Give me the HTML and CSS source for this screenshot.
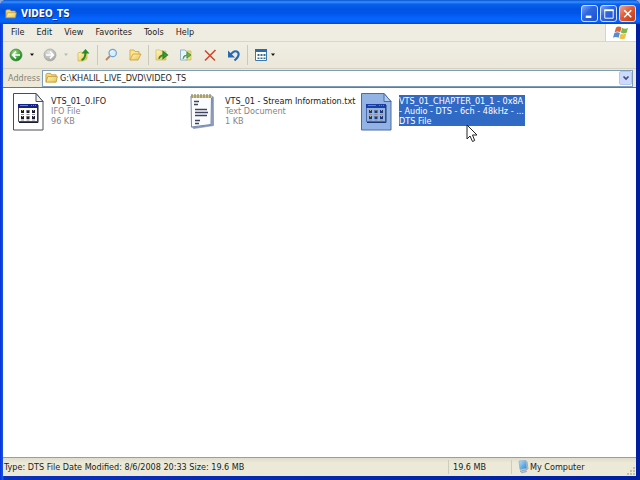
FILE: index.html
```html
<!DOCTYPE html>
<html lang="en">
<head>
<meta charset="utf-8">
<title>VIDEO_TS</title>
<link rel="stylesheet" href="styles.css">
</head>
<body>
<svg class="defs" aria-hidden="true">
  <defs>
    <linearGradient id="folder-fill" x2="1" y2="1"><stop stop-color="#fff9c4"/><stop offset="1" stop-color="#e8bf48"/></linearGradient>
    <radialGradient id="green-fill" cx=".4" cy=".3" r=".75"><stop stop-color="#9ade7c"/><stop offset=".6" stop-color="#3fa43a"/><stop offset="1" stop-color="#24762a"/></radialGradient>
    <radialGradient id="gray-fill" cx=".4" cy=".3" r=".75"><stop stop-color="#e2e2e0"/><stop offset="1" stop-color="#a3a3a1"/></radialGradient>
    <linearGradient id="screen-fill" x2="1" y2="1"><stop stop-color="#b9e3fb"/><stop offset="1" stop-color="#2a7fd2"/></linearGradient>
    <symbol id="folder" viewBox="0 0 14 12">
      <path d="M1 10V2l1-1h4l1 1.500h5v2" fill="#f3d873" stroke="#b58e2e" stroke-width=".8"/>
      <path d="M1 10.500 3 4.500h10.300L12 10.500z" fill="url(#folder-fill)" stroke="#b8912e" stroke-width=".8"/>
    </symbol>
    <symbol id="app-file" viewBox="0 0 32 39">
      <path class="paper" d="M1.500 1.500H24l7 8V38H1.500z"/>
      <path class="fold" d="M24 1.500V9.500h7z"/>
      <path class="panel" d="M6.500 12.500h19v17h-19z"/>
      <path class="panel-title" d="M6 12h20v4H6z"/>
      <path d="M8 13.500h8M19 13.500h1M21 13.500h1M23 13.500h1" stroke="#7484c8"/>
      <path class="panel-edge" d="M26 13v17.500H7"/>
      <path class="tiles" d="M9 18h3v3H9zM14.500 18h3v3h-3zM20 18h3v3h-3zM9 24h3v3H9zM14.500 24h3v3h-3zM20 24h3v3h-3z"/>
      <path d="M9 22.500h3M14.500 22.500h3M20 22.500h3M9 28h3M14.500 28h3M20 28h3" stroke="#8c8c98"/>
      <path d="M10 18.500h1M15.500 18.500h1M21 18.500h1M10 24.500h1M15.500 24.500h1M21 24.500h1" stroke="#c7a66a"/>
    </symbol>
  </defs>
</svg>
<div class="window">
  <header class="titlebar">
    <svg class="title-icon" aria-hidden="true"><use href="#folder"/></svg>
    <h1>VIDEO_TS</h1>
    <div class="controls">
      <button class="control" aria-label="Minimize"><svg viewBox="0 0 16 16"><path d="M4 11.500h6" stroke="#fff" stroke-width="2.500"/></svg></button>
      <button class="control" aria-label="Maximize"><svg viewBox="0 0 16 16"><path d="M4 4.500h9V13H4z" fill="none" stroke="#fff"/><path d="M3.500 4.500h10" stroke="#fff" stroke-width="2"/></svg></button>
      <button class="control close" aria-label="Close"><svg viewBox="0 0 16 16"><path d="m4.500 4.500 7.500 7.500M12 4.500 4.500 12" stroke="#fff" stroke-width="1.700"/></svg></button>
    </div>
  </header>
  <div class="menubar">
    <nav class="menus">
      <button>File</button><button>Edit</button><button>View</button><button>Favorites</button><button>Tools</button><button>Help</button>
    </nav>
    <div class="flag">
      <svg viewBox="0 0 18 16" aria-hidden="true">
        <path d="M4 2.500q3-2 5.500 0L8.200 7.300q-2.500-1.800-5.600 0z" fill="#d9673a"/>
        <path d="M10.200 2.800q2.500 1.600 5.800.2l-1.400 4.800q-3 1.400-5.700-.2z" fill="#7db64a"/>
        <path d="M2.400 8q3-1.700 5.500 0L6.600 12.700q-2.600-1.600-5.600 0z" fill="#588bd0"/>
        <path d="M8.700 8.400q2.500 1.600 5.700.2L13 13.500q-3 1.400-5.700-.3z" fill="#ecc348"/>
      </svg>
    </div>
  </div>
  <div class="toolbar">
    <button class="tool" aria-label="Back"><svg viewBox="0 0 14 14"><circle cx="7" cy="7" r="6" fill="url(#green-fill)" stroke="#3a8440" stroke-width=".7"/><path d="M11 7H4M7 3.600 3.600 7 7 10.400" fill="none" stroke="#fff" stroke-width="1.700"/></svg></button>
    <button class="drop" aria-label="Back history"><svg viewBox="0 0 6 4"><path d="M1 .5h4L3 3z" fill="#111"/></svg></button>
    <button class="tool" aria-label="Forward"><svg viewBox="0 0 14 14"><circle cx="7" cy="7" r="6" fill="url(#gray-fill)" stroke="#a5a5a2" stroke-width=".7"/><path d="M3 7h7M7 3.600 10.400 7 7 10.400" fill="none" stroke="#fff" stroke-width="1.700"/></svg></button>
    <button class="drop" aria-label="Forward history"><svg viewBox="0 0 6 4"><path d="M1 .5h4L3 3z" fill="#bbb9ae"/></svg></button>
    <button class="tool" aria-label="Up"><svg viewBox="0 0 14 14"><path d="M1 13V5l3-1 2 1h4v6l-4 2z" fill="url(#folder-fill)" stroke="#d0b24e" stroke-width=".7"/><path d="M4.500 12q4-1 4-8" fill="none" stroke="#278b2a" stroke-width="2"/><path d="M4.500 5.500 8.500 1l4 4.500z" fill="#278b2a"/></svg></button>
    <span class="rule"></span>
    <button class="tool" aria-label="Search"><svg viewBox="0 0 14 14"><path d="m6 8-4 4" stroke="#b78562" stroke-width="1.800"/><circle cx="8.700" cy="5" r="3.700" fill="#d7eefb" stroke="#6fa4d4" stroke-width="1.200"/><path d="M6.800 4.500Q7 3 8.800 3" stroke="#fff" fill="none"/></svg></button>
    <button class="tool spaced" aria-label="Folders"><svg viewBox="0 0 14 14"><path d="M2 12V2h4l1 1.500h4V6" fill="#f9e69b" stroke="#d5a83b" stroke-width=".9"/><path d="m2 12 3-6h8l-3 6z" fill="url(#folder-fill)" stroke="#ce9a2c" stroke-width=".8"/></svg></button>
    <span class="rule"></span>
    <button class="tool" aria-label="Move to"><svg viewBox="0 0 14 14"><path d="M1 12V2h4l1 1h5v9z" fill="url(#folder-fill)" stroke="#d1b75c" stroke-width=".7"/><path d="M4 11q0-4 5-4M8 3.500 12.500 7 8 10.500z" fill="#3d9f32" stroke="#2b8428" stroke-width="1.200"/></svg></button>
    <button class="tool spaced" aria-label="Copy to"><svg viewBox="0 0 14 14"><path d="M6 3h6v9H7z" fill="#f3df83" stroke="#cdb24b" stroke-width=".7"/><path d="M1.500 2H6l2 2v8H1.500z" fill="#e6f3fc" stroke="#83a5c2" stroke-width=".8"/><path d="M4 11q0-4 4-4M8 4l4 3-4 3z" fill="#66b04c" stroke="#4f983e"/></svg></button>
    <button class="tool spaced" aria-label="Delete"><svg viewBox="0 0 14 14"><path d="m2 2.500 10 10M12.500 2 2 12.500" stroke="#ce4b2c" stroke-width="1.600"/></svg></button>
    <button class="tool spaced" aria-label="Undo"><svg viewBox="0 0 14 14"><path d="M3 7.500C8 0 13.500 4 11 8.500q-1 2-3.500 4" fill="none" stroke="#2769b3" stroke-width="2.200"/><path d="M1 2.500v7h7z" fill="#2769b3"/></svg></button>
    <span class="rule"></span>
    <button class="tool" aria-label="Views"><svg viewBox="0 0 14 14"><path d="M1.500 2h11v10.500h-11z" fill="#fff" stroke="#3a78ae"/><path d="M1 2.500h12" stroke="#2f6ca5" stroke-width="3"/><path d="M3.500 6h2v2h-2zM6.500 6h2v2h-2zM9.500 6h2v2h-2zM3.500 9.500h2v1.500h-2zM6.500 9.500h2v1.500h-2zM9.500 9.500h2v1.500h-2z" fill="#387194"/></svg></button>
    <button class="drop views" aria-label="View options"><svg viewBox="0 0 6 4"><path d="M1 .5h4L3 3z" fill="#111"/></svg></button>
  </div>
  <div class="addressbar">
    <label for="address">Address</label>
    <div class="address-box">
      <svg class="address-icon" aria-hidden="true"><use href="#folder"/></svg>
      <input id="address" type="text" value="G:\KHALIL_LIVE_DVD\VIDEO_TS">
      <button aria-label="Show addresses"><svg viewBox="0 0 8 6"><path d="m1.500 1.500 2.500 2.500 2.500-2.500" fill="none" stroke="#3c4f83" stroke-width="1.700"/></svg></button>
    </div>
  </div>
  <main>
    <ul class="files">
      <li><button class="file">
        <svg class="file-icon" aria-hidden="true"><use href="#app-file"/></svg>
        <span class="details"><span class="name">VTS_01_0.IFO</span><span>IFO File</span><span>96 KB</span></span>
      </button></li>
      <li><button class="file">
        <svg class="file-icon" viewBox="-1 0 32 39" aria-hidden="true">
          <path d="M5 4h20l2 1v29L7 37l-3-2z" fill="#a5b3cc"/>
          <path d="M4 4h20.500l-.5 28.500L4.500 35z" fill="#fbfcff" stroke="#7688ac"/>
          <path d="M25.500 4.500 26 33 6 36" fill="none" stroke="#7f8fae"/>
          <path d="M4 4.500h21" stroke="#d8ca83" stroke-width="3"/>
          <path d="M5 6V2m3 4V2m3 4V2m3 4V2m3 4V2m3 4V2m3 4V2" stroke="#8c8060" stroke-width="1.200"/>
          <path d="M7 9.500h5M7 12.500h4M8 17.500h12M8 20.500h13M8 23.500h12M8 28.500h5M8 31.500h4" stroke="#3c4460" stroke-width="1.300"/>
        </svg>
        <span class="details"><span class="name">VTS_01 - Stream Information.txt</span><span>Text Document</span><span>1 KB</span></span>
      </button></li>
      <li><button class="file selected">
        <svg class="file-icon" aria-hidden="true"><use href="#app-file"/></svg>
        <span class="details"><span class="name">VTS_01_CHAPTER_01_1 - 0x8A</span><span>- Audio - DTS - 6ch - 48kHz - ...</span><span>DTS File</span></span>
      </button></li>
    </ul>
    <svg class="pointer" viewBox="0 0 12 19" aria-hidden="true"><path d="M1 1v14l3-3 2.500 5.500 2.200-1L6.500 11H11z" fill="#fff" stroke="#222"/></svg>
  </main>
  <footer class="statusbar">
    <span class="info">Type: DTS File Date Modified: 8/6/2008 20:33 Size: 19.6 MB</span>
    <span class="size">19.6 MB</span>
    <span class="place">
      <svg viewBox="0 0 12 14" aria-hidden="true"><path d="m2 1 7-.5 1 8-7 1z" fill="url(#screen-fill)" stroke="#8cb2d5" stroke-width=".8"/><path d="M10 1.500 11 9l-6 2" fill="none" stroke="#9daab8"/><path d="m3 11 5-1 2 1.500L5 13z" fill="#b5c1cc" stroke="#7e8d9d" stroke-width=".5"/></svg>
      My Computer
    </span>
    <svg class="grip" viewBox="0 0 10 10" aria-hidden="true"><path d="M7 1h2v2H7zM4 4h2v2H4zM7 4h2v2H7zM1 7h2v2H1zM4 7h2v2H4zM7 7h2v2H7z" fill="#c3bfae"/></svg>
  </footer>
</div>
</body>
</html>
```
FILE: styles.css
```css
* { box-sizing: border-box; }

body {
  margin: 0;
  background: #8aa6dc;
  color: #1c1c1c;
  font: 9px/11px "DejaVu Sans Condensed", "DejaVu Sans", sans-serif;
}

button, input {
  margin: 0;
  padding: 0;
  border: 0;
  background: none;
  color: inherit;
  font: inherit;
}

svg { display: block; flex: none; }

.defs { position: absolute; width: 0; height: 0; }

.window {
  display: flex;
  flex-direction: column;
  min-height: 100vh;
  padding: 0 4px 4px 3px;
  border-radius: 6px 6px 0 0;
  background: linear-gradient(to right, #0831d9, #1656e0 3px, #0a30bc 4px, #001ea0);
}

.titlebar {
  display: flex;
  align-items: center;
  gap: 4px;
  height: 24px;
  margin: 0 -4px 0 -3px;
  padding: 3px 4px 0 5px;
  border-radius: 6px 6px 0 0;
  background: linear-gradient(#0a52cc, #3590ff 2px, #0a61ee 4px, #0054e3 9px, #0055e8 13px, #0466ff 19px, #0462f6 22px, #0144c4);
}

.title-icon { width: 12px; height: 12px; }

.titlebar h1 {
  flex: 1;
  margin: 0;
  color: #fff;
  font: bold 10px/14px "DejaVu Sans Condensed", sans-serif;
  text-shadow: 1px 1px #0f2f80;
}

.controls { display: flex; gap: 2px; }

.control {
  width: 17px;
  height: 17px;
  border: 1px solid #d2e0ff;
  border-radius: 3px;
  background: linear-gradient(135deg, #7ba5f4, #2f67e2 40%, #1e51cb);
}

.control.close { background: linear-gradient(135deg, #f0a48c, #df5c37 45%, #c03a12); }

.control svg { width: 15px; height: 15px; }

.menubar {
  display: flex;
  height: 18px;
  border-bottom: 1px solid #dbd7c8;
  background: #efede2;
}

.menus {
  display: flex;
  flex: 1;
  gap: 12px;
  padding-left: 8px;
  border-right: 1px solid #d8d4c4;
}

.flag { display: flex; align-items: center; justify-content: center; width: 30px; background: #fff; }
.flag svg { width: 18px; height: 16px; }

.toolbar {
  display: flex;
  align-items: center;
  height: 27px;
  padding-left: 6px;
  border-bottom: 1px solid #d5d1c0;
  background: linear-gradient(#f0eee3, #ebe8da);
}

.tool svg { width: 14px; height: 14px; }
.spaced { margin-left: 10px; }
.drop { width: 6px; margin: 0 8px 0 6px; }
.drop svg { width: 6px; height: 4px; }
.drop.views { margin-left: 2px; }
.rule { width: 1px; height: 20px; margin: 0 6px; background: #cdc9b9; }

.addressbar {
  display: flex;
  align-items: center;
  height: 18px;
  padding: 0 3px 0 5px;
  background: #ece9d8;
}

.addressbar label { width: 34px; color: #85837a; }

.address-box {
  display: flex;
  flex: 1;
  align-items: center;
  height: 17px;
  border: 1px solid #7f9db9;
  background: #fff;
}

.address-icon { width: 13px; height: 12px; margin: 0 2px; }
.address-box input { flex: 1; min-width: 0; height: 15px; outline: 0; }

.address-box button {
  display: flex;
  align-items: center;
  justify-content: center;
  width: 13px;
  height: 14px;
  border: 1px solid #b3c7f3;
  border-radius: 2px;
  background: #cddafb;
}

.address-box button svg { width: 8px; height: 6px; }

main {
  position: relative;
  flex: 1;
  border-top: 1px solid #77776f;
  background: #fff;
}

.files {
  display: grid;
  grid-template-columns: repeat(auto-fill, 174px);
  margin: 0;
  padding: 4px 0 0 9px;
  list-style: none;
}

.file {
  --paper: #fff;
  --fold: #eef0f3;
  --outline: #4a4e56;
  --title: #14248a;
  --ink: #1b1b30;
  display: flex;
  align-items: flex-start;
  gap: 7px;
  text-align: left;
}

.file.selected {
  --paper: #93b3e4;
  --fold: #b5cdf2;
  --outline: #4a6ba6;
  --title: #1b3fa4;
  --ink: #1d3878;
}

.file-icon { width: 32px; height: 39px; }

.paper, .panel { fill: var(--paper); stroke: var(--outline); }
.fold { fill: var(--fold); stroke: var(--outline); }
.panel-title, .tiles { fill: var(--ink); }
.panel-title { fill: var(--title); }
.panel-edge { fill: none; stroke: var(--ink); }

.details {
  display: flex;
  flex-direction: column;
  margin-top: 3px;
  padding-top: 1px;
  color: #85858a;
  line-height: 10px;
  white-space: nowrap;
}

.name { color: #1c1c1c; }

.selected .details { min-width: 126px; background: #316ac5; color: #fff; }
.selected .name { color: #fff; }

.pointer { position: absolute; top: 36px; left: 463px; width: 12px; height: 19px; }

.statusbar {
  display: flex;
  align-items: center;
  height: 19px;
  border-top: 1px solid #a19e91;
  background: linear-gradient(#dfdccb, #ece9d8 5px);
}

.info { flex: 1; padding-left: 1px; }

.size, .place {
  display: flex;
  align-items: center;
  height: 14px;
  border-left: 1px solid #d0ccbb;
}

.size { width: 63px; padding-left: 4px; }
.place { gap: 1px; width: 115px; padding-left: 5px; }
.place svg { width: 12px; height: 14px; }
.grip { align-self: flex-end; width: 10px; height: 10px; }
```
